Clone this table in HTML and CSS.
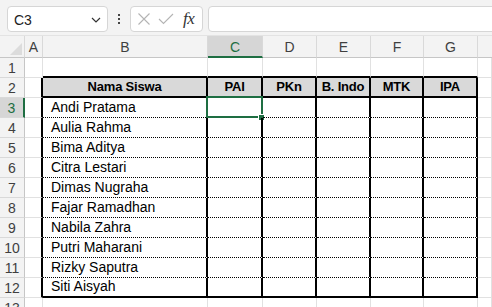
FILE: index.html
```html
<!DOCTYPE html>
<html>
<head>
<meta charset="utf-8">
<link rel="stylesheet" href="styles.css">
</head>
<body>
<div class="app">
  <div class="toolbar">
    <div class="namebox">
      <span class="nb-text">C3</span>
      <svg class="chev" width="10" height="6" viewBox="0 0 10 6"><path d="M1 1 L5 5 L9 1" fill="none" stroke="#333" stroke-width="1.2"/></svg>
    </div>
    <div class="kebab"><i></i><i></i><i></i></div>
    <div class="fbtns">
      <svg width="14" height="14" viewBox="0 0 14 14"><path d="M1.5 1.5 L12.5 12.5 M12.5 1.5 L1.5 12.5" stroke="#b4b4b4" stroke-width="1.1" fill="none"/></svg>
      <svg width="16" height="12" viewBox="0 0 16 12"><path d="M1 6 L5.5 10.5 L15 1" stroke="#b4b4b4" stroke-width="1.1" fill="none"/></svg>
      <span class="fx">fx</span>
    </div>
    <div class="finput"></div>
  </div>
  <div class="sheet">
    <div class="ch corner"><svg width="12" height="12" viewBox="0 0 12 12"><path d="M12 0 L12 12 L0 12 Z" fill="#dcdcdc"/></svg></div>
    <div class="ch">A</div>
    <div class="ch">B</div>
    <div class="ch sel">C</div>
    <div class="ch">D</div>
    <div class="ch">E</div>
    <div class="ch">F</div>
    <div class="ch">G</div>
    <div class="ch last"></div>

    <div class="rh">1</div>
    <div class="c"></div><div class="c tb"></div><div class="c tb"></div><div class="c tb"></div><div class="c tb"></div><div class="c tb"></div><div class="c tb"></div><div class="c"></div>

    <div class="rh">2</div>
    <div class="c tr"></div>
    <div class="c hd tr tbs">Nama Siswa</div>
    <div class="c hd tr tbs">PAI</div>
    <div class="c hd tr tbs">PKn</div>
    <div class="c hd tr tbs">B. Indo</div>
    <div class="c hd tr tbs">MTK</div>
    <div class="c hd tr tbs">IPA</div>
    <div class="c"></div>

    <div class="rh rsel">3</div>
    <div class="c tr"></div><div class="c nm tr dot">Andi Pratama</div><div class="c tr dot active"><span class="selbox"></span><span class="handle"></span></div><div class="c tr dot"></div><div class="c tr dot"></div><div class="c tr dot"></div><div class="c tr dot"></div><div class="c"></div>

    <div class="rh">4</div>
    <div class="c tr"></div><div class="c nm tr dot">Aulia Rahma</div><div class="c tr dot"></div><div class="c tr dot"></div><div class="c tr dot"></div><div class="c tr dot"></div><div class="c tr dot"></div><div class="c"></div>

    <div class="rh">5</div>
    <div class="c tr"></div><div class="c nm tr dot">Bima Aditya</div><div class="c tr dot"></div><div class="c tr dot"></div><div class="c tr dot"></div><div class="c tr dot"></div><div class="c tr dot"></div><div class="c"></div>

    <div class="rh">6</div>
    <div class="c tr"></div><div class="c nm tr dot">Citra Lestari</div><div class="c tr dot"></div><div class="c tr dot"></div><div class="c tr dot"></div><div class="c tr dot"></div><div class="c tr dot"></div><div class="c"></div>

    <div class="rh">7</div>
    <div class="c tr"></div><div class="c nm tr dot">Dimas Nugraha</div><div class="c tr dot"></div><div class="c tr dot"></div><div class="c tr dot"></div><div class="c tr dot"></div><div class="c tr dot"></div><div class="c"></div>

    <div class="rh">8</div>
    <div class="c tr"></div><div class="c nm tr dot">Fajar Ramadhan</div><div class="c tr dot"></div><div class="c tr dot"></div><div class="c tr dot"></div><div class="c tr dot"></div><div class="c tr dot"></div><div class="c"></div>

    <div class="rh">9</div>
    <div class="c tr"></div><div class="c nm tr dot">Nabila Zahra</div><div class="c tr dot"></div><div class="c tr dot"></div><div class="c tr dot"></div><div class="c tr dot"></div><div class="c tr dot"></div><div class="c"></div>

    <div class="rh">10</div>
    <div class="c tr"></div><div class="c nm tr dot">Putri Maharani</div><div class="c tr dot"></div><div class="c tr dot"></div><div class="c tr dot"></div><div class="c tr dot"></div><div class="c tr dot"></div><div class="c"></div>

    <div class="rh">11</div>
    <div class="c tr"></div><div class="c nm tr dot">Rizky Saputra</div><div class="c tr dot"></div><div class="c tr dot"></div><div class="c tr dot"></div><div class="c tr dot"></div><div class="c tr dot"></div><div class="c"></div>

    <div class="rh">12</div>
    <div class="c tr"></div><div class="c nm tr tbs">Siti Aisyah</div><div class="c tr tbs"></div><div class="c tr tbs"></div><div class="c tr tbs"></div><div class="c tr tbs"></div><div class="c tr tbs"></div><div class="c"></div>

    <div class="rh">13</div>
    <div class="c"></div><div class="c"></div><div class="c"></div><div class="c"></div><div class="c"></div><div class="c"></div><div class="c"></div><div class="c"></div>
  </div>
</div>
</body>
</html>
```

FILE: styles.css
```css
* { box-sizing: border-box; }
html, body { margin: 0; padding: 0; }
body {
  width: 492px;
  height: 307px;
  overflow: hidden;
  background: #ffffff;
  font-family: "Liberation Sans", Arial, sans-serif;
  color: #000;
}
.app { width: 492px; }

.toolbar {
  height: 36px;
  background: #f3f3f3;
  border-bottom: 1px solid #e3e3e3;
  display: flex;
  align-items: flex-start;
  padding: 6px 0 0 7px;
  overflow: hidden;
}
.namebox {
  width: 101px;
  height: 26px;
  flex: none;
  background: #fff;
  border: 1px solid #d6d6d6;
  border-radius: 4px;
  display: flex;
  align-items: center;
  justify-content: space-between;
  padding: 0 6px 0 6px;
  font-size: 14px;
  color: #222;
}
.nb-text { padding-top: 1px; }
.chev { margin-top: 1px; }
.kebab {
  width: 22px;
  flex: none;
  height: 26px;
  display: flex;
  flex-direction: column;
  align-items: center;
  justify-content: center;
  gap: 2px;
}
.kebab i {
  display: block;
  width: 2px;
  height: 2px;
  background: #444;
}
.fbtns {
  width: 73px;
  height: 26px;
  flex: none;
  background: #fff;
  border: 1px solid #d6d6d6;
  border-radius: 4px;
  display: flex;
  align-items: center;
  gap: 7px;
  padding: 0 0 0 6px;
}
.fx {
  font-family: "Liberation Serif", serif;
  font-style: italic;
  font-size: 17px;
  color: #333;
  margin-left: 2px;
  letter-spacing: -0.5px;
}
.finput {
  flex: none;
  width: 300px;
  height: 26px;
  margin-left: 5px;
  background: #fff;
  border: 1px solid #d6d6d6;
  border-radius: 4px;
}

.sheet {
  display: grid;
  grid-template-columns: 25px 18px 165px 55px 54px 54px 53px 54px 14px;
  grid-template-rows: 22px repeat(13, 20px);
}
.ch, .rh {
  background: #f3f3f3;
  color: #3f3f3f;
  font-size: 14px;
  display: flex;
  align-items: center;
  justify-content: center;
  border-right: 1px solid #d9d9d9;
  border-bottom: 1px solid #c6c6c6;
}
.rh { border-right: 1px solid #c6c6c6; border-bottom: 1px solid #d9d9d9; padding-top: 1px; }
.ch { padding-top: 1px; }
.corner {
  justify-content: flex-end;
  align-items: flex-end;
  padding: 0 2px 2px 0;
}
.ch.sel {
  background: #d6d6d6;
  color: #1e6e42;
  border-bottom: 2px solid #1e6e42;
}
.rh.rsel {
  background: #d6d6d6;
  color: #1e6e42;
  border-right: 2px solid #1e6e42;
}
.ch.last { border-right: none; }

.c {
  position: relative;
  border-right: 1px solid #e1e1e1;
  border-bottom: 1px solid #e1e1e1;
  font-size: 14px;
  display: flex;
  align-items: flex-end;
  padding-bottom: 2px;
  white-space: nowrap;
}
.c.tr { border-right: 2px solid #000; }
.c.tb { border-bottom: 2px solid #000; }
.c.tbs { border-bottom: 2px solid #000; }
.c.dot { border-bottom: 1px dotted #000; }
.c.hd {
  background: #d9d9d9;
  font-weight: bold;
  font-size: 13px;
  letter-spacing: -0.2px;
  justify-content: center;
}
.c.nm { padding-left: 8px; }

.selbox {
  position: absolute;
  left: -2px;
  top: -2px;
  right: -2px;
  bottom: -1px;
  border: 2px solid #1e6e42;
}
.handle {
  position: absolute;
  right: -4px;
  bottom: -4px;
  width: 7px;
  height: 7px;
  background: #1e6e42;
  border: 1px solid #fff;
}
```
